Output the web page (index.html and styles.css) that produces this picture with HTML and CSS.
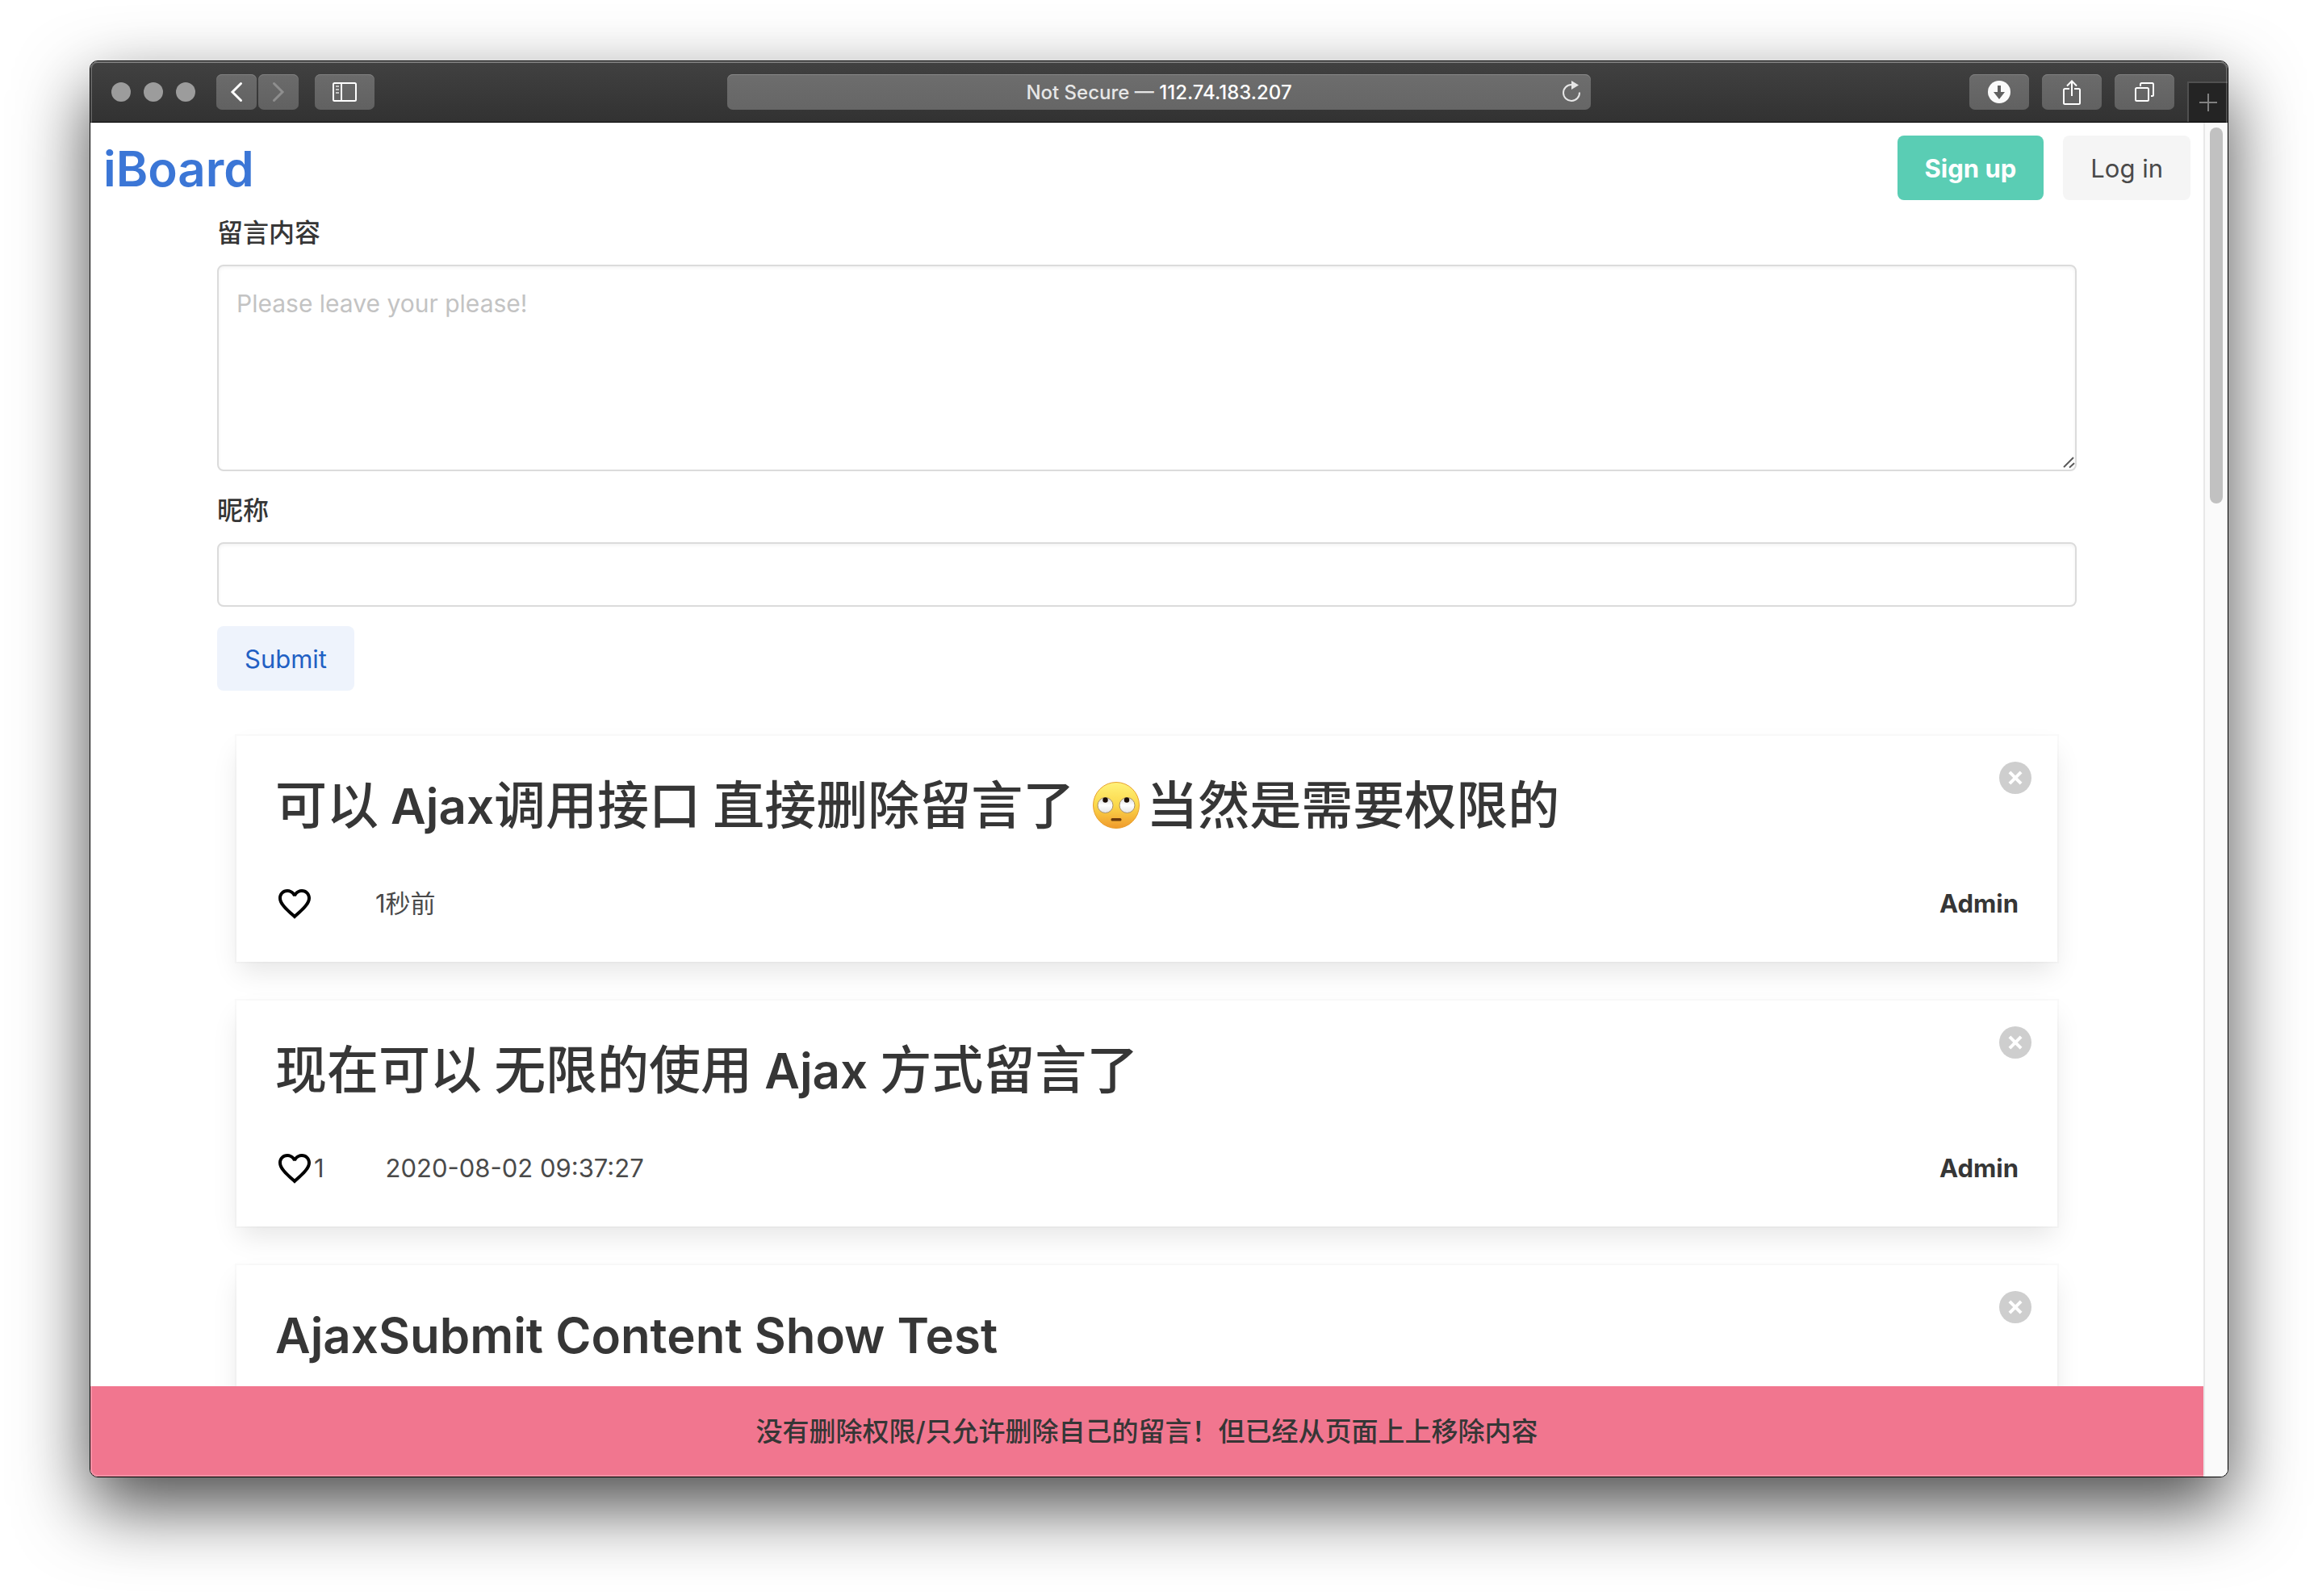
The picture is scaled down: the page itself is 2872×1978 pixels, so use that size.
FILE: index.html
```html
<!DOCTYPE html>
<html lang="zh-CN">
<head>
<meta charset="utf-8">
<title>iBoard</title>
<link rel="stylesheet" href="styles.css">
</head>
<body>
<div class="window">
  <header class="toolbar">
    <div class="toolbar-group">
      <div class="lights"><span class="light"></span><span class="light"></span><span class="light"></span></div>
      <div class="tools">
        <div class="nav-pair">
          <button class="tool tool-narrow" type="button" aria-label="Back"><svg width="16" height="26" viewBox="0 0 16 26"><path d="M13.500 2.500L3 13l10.500 10.500" fill="none" stroke="#fff" stroke-width="3" stroke-linecap="round"/></svg></button>
          <button class="tool tool-narrow" type="button" aria-label="Forward"><svg width="16" height="26" viewBox="0 0 16 26"><path d="M2.500 2.500L13 13L2.500 23.500" fill="none" stroke="#8e8e8e" stroke-width="3" stroke-linecap="round"/></svg></button>
        </div>
        <button class="tool" type="button" aria-label="Sidebar"><svg width="30" height="24" viewBox="0 0 30 24"><rect x="1" y="1" width="28" height="22" rx="1.500" fill="none" stroke="#fff" stroke-width="2"/><path d="M11 1v22" stroke="#fff" stroke-width="2"/><path d="M4 5h4M4 9h4M4 13h4" stroke="#c4c4c4" stroke-width="2"/></svg></button>
      </div>
    </div>
    <div class="address">
      <span class="address-text">Not Secure — <strong>112.74.183.207</strong></span>
      <button class="reload" type="button" aria-label="Reload"><svg width="24" height="28" viewBox="0 0 24 28"><path d="M12 6A10 10 0 1 0 22 15.500" fill="none" stroke="#e6e6e6" stroke-width="2"/><path d="M12 1l9 5.500L12 12z" fill="#e6e6e6"/></svg></button>
    </div>
    <div class="toolbar-group toolbar-end">
      <div class="tools tools-end">
        <button class="tool" type="button" aria-label="Downloads"><svg width="28" height="28" viewBox="0 0 28 28"><circle cx="14" cy="14" r="14" fill="#fafafa"/><path d="M12 6h4v8h5l-7 9l-7-9h5z" fill="#606060"/></svg></button>
        <button class="tool" type="button" aria-label="Share"><svg width="22" height="32" viewBox="0 0 22 32"><path d="M8 12H2.500Q1 12 1 13.500V29.500Q1 31 2.500 31H19.500Q21 31 21 29.500V13.500Q21 12 19.500 12H14" fill="none" stroke="#fff" stroke-width="2"/><path d="M11 21V3M5 8.500L11 2.500L17 8.500" fill="none" stroke="#fff" stroke-width="2"/></svg></button>
        <button class="tool" type="button" aria-label="Tabs"><svg width="24" height="24" viewBox="0 0 24 24"><rect x="1" y="7" width="16" height="16" rx="1.500" fill="none" stroke="#fff" stroke-width="2"/><path d="M7 5V2.500Q7 1 8.500 1H21.500Q23 1 23 2.500V15.500Q23 17 21.500 17H20" fill="none" stroke="#fff" stroke-width="2"/></svg></button>
      </div>
      <button class="new-tab" type="button" aria-label="New tab"><svg width="22" height="22" viewBox="0 0 22 22"><path d="M11 0v22M0 11h22" stroke="#808080" stroke-width="2"/></svg></button>
    </div>
  </header>

  <div class="viewport">
    <div class="page">
      <nav class="navbar">
        <a class="brand" href="#">iBoard</a>
        <div class="navbar-buttons">
          <a class="button button-primary" href="#">Sign up</a>
          <a class="button button-light" href="#">Log in</a>
        </div>
      </nav>

      <main class="container">
        <form class="form">
          <div class="field">
            <label class="label" for="content">留言内容</label>
            <div class="control">
              <textarea class="input textarea" id="content" placeholder="Please leave your please!"></textarea>
              <svg class="grip" width="16" height="16" viewBox="0 0 16 16" aria-hidden="true"><path d="M2 14L14 2M9 14.500L15 9" stroke="#5a5a5a" stroke-width="2"/></svg>
            </div>
          </div>
          <div class="field">
            <label class="label" for="nickname">昵称</label>
            <input class="input" id="nickname" type="text">
          </div>
          <button class="button button-link" type="button">Submit</button>
        </form>

        <section class="messages">
          <article class="box">
            <button class="delete" type="button" aria-label="删除"></button>
            <h2 class="title">可以<span class="latin"> Ajax</span>调用接口<span class="latin"> </span>直接删除留言了 <svg class="emoji" role="img" aria-label="🙄" viewBox="0 0 58 58"><defs><linearGradient id="face" x1="0" y1="0" x2="0" y2="1"><stop offset="0" stop-color="#fff27a"/><stop offset=".5" stop-color="#fbd84b"/><stop offset="1" stop-color="#f09a2c"/></linearGradient><linearGradient id="eye" x1="0" y1="0" x2="0" y2="1"><stop offset="0" stop-color="#d8d8d8"/><stop offset=".5" stop-color="#fff"/><stop offset="1" stop-color="#e4e4e4"/></linearGradient></defs><circle cx="29" cy="29" r="28.500" fill="url(#face)" stroke="#e8a030"/><circle cx="15.500" cy="29" r="9.500" fill="url(#eye)" stroke="#a8906a"/><circle cx="42.500" cy="29" r="9.500" fill="url(#eye)" stroke="#a8906a"/><circle cx="15.500" cy="22.500" r="3.200" fill="#1a0d04"/><circle cx="42" cy="22.500" r="3.200" fill="#1a0d04"/><rect x="22.500" y="45" width="13" height="3.500" rx="1.500" fill="#6b3a0c"/></svg>当然是需要权限的</h2>
            <footer class="meta">
              <button class="like" type="button" aria-label="喜欢"><svg class="heart" viewBox="0 0 24 24"><path d="M16.500 3c-1.740 0-3.410.81-4.500 2.090C10.910 3.810 9.240 3 7.500 3 4.420 3 2 5.420 2 8.500c0 3.780 3.400 6.860 8.550 11.540L12 21.350l1.450-1.320C18.600 15.360 22 12.280 22 8.500 22 5.420 19.580 3 16.500 3zm-4.400 15.550l-.1.100-.1-.1C7.140 14.240 4 11.390 4 8.500 4 6.500 5.500 5 7.500 5c1.540 0 3.040.99 3.570 2.360h1.870C13.460 5.990 14.960 5 16.500 5c2 0 3.500 1.500 3.500 3.500 0 2.890-3.140 5.740-7.900 10.050z"/></svg></button>
              <time class="time">1秒前</time>
              <strong class="author">Admin</strong>
            </footer>
          </article>
          <article class="box">
            <button class="delete" type="button" aria-label="删除"></button>
            <h2 class="title">现在可以<span class="latin"> </span>无限的使用<span class="latin"> Ajax </span>方式留言了</h2>
            <footer class="meta">
              <button class="like" type="button" aria-label="喜欢"><svg class="heart" viewBox="0 0 24 24"><path d="M16.500 3c-1.740 0-3.410.81-4.500 2.090C10.910 3.810 9.240 3 7.500 3 4.420 3 2 5.420 2 8.500c0 3.780 3.400 6.860 8.550 11.540L12 21.350l1.450-1.320C18.600 15.360 22 12.280 22 8.500 22 5.420 19.580 3 16.500 3zm-4.400 15.550l-.1.100-.1-.1C7.140 14.240 4 11.390 4 8.500 4 6.500 5.500 5 7.500 5c1.540 0 3.040.99 3.570 2.360h1.870C13.460 5.990 14.960 5 16.500 5c2 0 3.500 1.500 3.500 3.500 0 2.890-3.140 5.740-7.900 10.050z"/></svg>1</button>
              <time class="time">2020-08-02 09:37:27</time>
              <strong class="author">Admin</strong>
            </footer>
          </article>
          <article class="box">
            <button class="delete" type="button" aria-label="删除"></button>
            <h2 class="title"><span class="latin">AjaxSubmit Content Show Test</span></h2>
            <footer class="meta"></footer>
          </article>
        </section>
      </main>

      <div class="notification" role="alert">没有删除权限/只允许删除自己的留言！但已经从页面上上移除内容</div>
    </div>
    <div class="scrollbar"><div class="thumb"></div></div>
  </div>
</div>
</body>
</html>
```
FILE: styles.css
```css
*, *::before, *::after { box-sizing: border-box; }

body {
  margin: 0;
  padding: 75px 111px 147px;
  height: 100vh;
  display: flex;
  overflow: hidden;
  background: #fff;
  color: #4a4a4a;
  font-family: Inter, "Noto Sans CJK SC", sans-serif;
  font-size: 31px;
  line-height: 48px;
}

button, input, textarea { font: inherit; color: inherit; }
button { border: 0; padding: 0; background: none; }
a { text-decoration: none; }
svg { display: block; flex: none; }

/* Browser window */
.window {
  position: relative;
  flex: 1;
  min-width: 0;
  display: flex;
  flex-direction: column;
  overflow: hidden;
  border: 1px solid #000;
  border-radius: 10px;
  background: #fff;
  box-shadow: 0 36px 88px rgba(0, 0, 0, .71);
}
.window::after {
  content: "";
  position: absolute;
  inset: 0;
  border: 2px solid rgba(255, 255, 255, .2);
  border-radius: 9px;
  pointer-events: none;
}

.toolbar {
  flex: none;
  height: 76px;
  display: grid;
  grid-template-columns: minmax(0, 1fr) 1070px minmax(0, 1fr);
  align-items: center;
  border-bottom: 1px solid #000;
  background: linear-gradient(#414141, #323232);
  box-shadow: inset 0 2px #5c5c5c;
}
.toolbar-group { display: flex; align-items: center; gap: 26px; padding-left: 26px; }
.toolbar-end { align-self: stretch; justify-content: flex-end; gap: 16px; padding-left: 0; }
.lights { display: flex; gap: 16px; }
.light { width: 24px; height: 24px; border-radius: 50%; background: #9c9c9c; }
.tools { display: flex; gap: 20px; }
.tools-end { gap: 16px; }
.nav-pair { display: flex; gap: 2px; }
.tool {
  width: 74px;
  height: 44px;
  display: flex;
  align-items: center;
  justify-content: center;
  border-radius: 7px;
  background: linear-gradient(#6b6b6b, #616161);
  box-shadow: inset 0 1px #808080;
}
.tool-narrow { width: 50px; }
.address {
  position: relative;
  height: 44px;
  padding-top: 2px;
  display: flex;
  align-items: center;
  justify-content: center;
  border-radius: 7px;
  background: linear-gradient(#6d6d6d, #666);
  box-shadow: inset 0 1px #888;
  color: #e6e6e6;
  font-size: 24px;
  font-weight: 500;
}
.address-text strong { color: #fff; font-weight: 500; }
.reload { position: absolute; right: 12px; top: 7px; }
.new-tab {
  align-self: flex-end;
  width: 50px;
  height: 50px;
  display: flex;
  align-items: center;
  justify-content: center;
  border: 2px solid #505050;
  border-width: 2px 0 0 2px;
  background: #242424;
}

.viewport { flex: 1; min-height: 0; display: flex; }
.page {
  position: relative;
  flex: 1;
  min-width: 0;
  overflow: hidden;
}
.scrollbar {
  width: 30px;
  padding: 6px;
  border-left: 2px solid #e8e8e8;
  background: #fafafa;
}
.thumb { width: 16px; height: 28%; border-radius: 8px; background: #c1c1c1; }

/* Page */
.navbar {
  display: flex;
  align-items: center;
  justify-content: space-between;
  height: 112px;
  padding: 0 16px;
}
.brand { padding-top: 2px; color: #3b76d6; font-size: 60px; font-weight: 600; line-height: 72px; }
.navbar-buttons { display: flex; gap: 24px; }
.button {
  display: inline-flex;
  align-items: center;
  height: 80px;
  padding: 2px 34px 0;
  border-radius: 8px;
}
.button-primary { background: #5acdb4; color: #fff; font-weight: 700; }
.button-light { background: #f5f5f5; color: #4a4a4a; }
.button-link { background: #eef3fc; color: #2160c4; }

.container { max-width: 2304px; margin: 0 auto; }
.field { margin-bottom: 24px; }
.label { display: block; margin-bottom: 14px; color: #363636; font-size: 32px; font-weight: 500; line-height: 50px; }
.control { position: relative; }
.input {
  display: block;
  width: 100%;
  height: 80px;
  padding: 0 22px;
  border: 2px solid #dbdbdb;
  border-radius: 8px;
  background: #fff;
  box-shadow: inset 0 2px 4px rgba(10, 10, 10, .05);
  outline: 0;
  font-size: 30px;
}
.textarea { height: 256px; padding: 22px; resize: none; }
.input::placeholder { color: #c3c3c3; opacity: 1; }
.grip { position: absolute; right: 2px; bottom: 3px; }

.messages { margin-top: 56px; padding: 0 24px; display: grid; gap: 48px; }
.box {
  position: relative;
  padding: 48px;
  background: #fff;
  box-shadow: 0 16px 32px -4px rgba(10, 10, 10, .1), 0 0 0 2px rgba(10, 10, 10, .02);
}
.title { margin: 0 0 60px; color: #363636; font-size: 64px; font-weight: 500; line-height: 76px; }
.latin { font-size: 60px; font-weight: 600; line-height: 60px; }
.emoji { display: inline-block; width: 58px; height: 58px; margin: 0 8px 0 6px; vertical-align: -6px; }
.meta { display: flex; align-items: center; min-height: 48px; }
.like { display: flex; align-items: center; height: 48px; }
.heart { width: 48px; height: 48px; fill: #000; }
.time { margin-left: 76px; }
.author { margin-left: auto; color: #363636; font-weight: 700; }
.delete {
  position: absolute;
  top: 32px;
  right: 32px;
  width: 40px;
  height: 40px;
  border-radius: 50%;
  background: #cecece;
}
.delete::before, .delete::after {
  content: "";
  position: absolute;
  top: 18px;
  left: 10px;
  width: 20px;
  height: 4px;
  background: #fff;
  transform: rotate(45deg);
}
.delete::after { transform: rotate(-45deg); }

.notification {
  position: absolute;
  left: 0;
  right: 0;
  bottom: 0;
  padding: 32px;
  background: #f1768f;
  color: #363636;
  font-size: 33px;
  font-weight: 500;
  text-align: center;
}
```
